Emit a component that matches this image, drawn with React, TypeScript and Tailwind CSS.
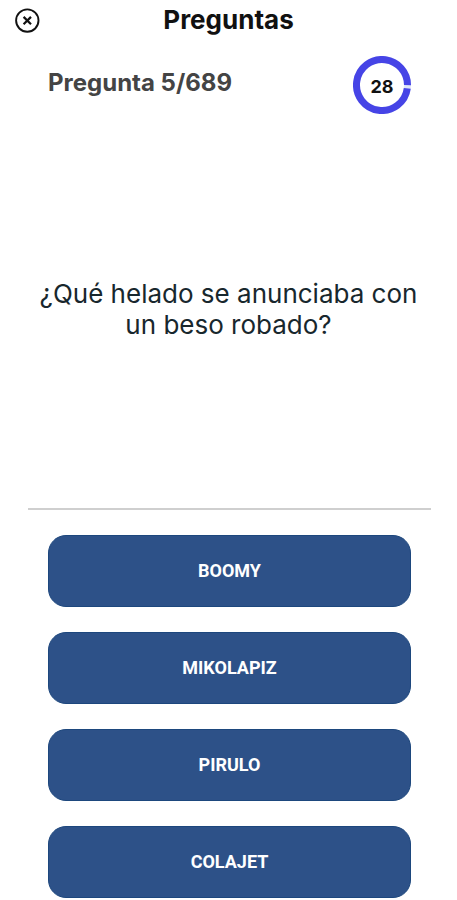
import { useState } from "react";

const question = {
  number: 5,
  total: 689,
  text: "¿Qué helado se anunciaba con un beso robado?",
  answers: ["BOOMY", "MIKOLAPIZ", "PIRULO", "COLAJET"],
};

const radius = 25.5;
const circumference = 2 * Math.PI * radius;

function CloseIcon() {
  return (
    <svg width="26" height="26" viewBox="0 0 26 26" fill="none" stroke="#111">
      <circle cx="13.3" cy="13.6" r="11.2" strokeWidth="1.9" />
      <path
        d="M9.6 9.9l7.4 7.4M17 9.9l-7.4 7.4"
        strokeWidth="2.2"
        strokeLinecap="butt"
      />
    </svg>
  );
}

function Timer({ seconds, total }: { seconds: number; total: number }) {
  const elapsed = (total - seconds) / total;

  return (
    <div className="grid place-items-center" role="timer">
      <svg
        className="col-start-1 row-start-1"
        width="58"
        height="58"
        viewBox="0 0 58 58"
        fill="none"
        strokeWidth="7"
      >
        <circle cx="29" cy="29" r={radius} stroke="#dfe5f8" />
        <circle
          cx="29"
          cy="29"
          r={radius}
          stroke="#4644e6"
          pathLength={circumference}
          strokeDasharray={`${circumference * (1 - elapsed)} ${circumference}`}
          transform={`rotate(${elapsed * 360} 29 29)`}
        />
      </svg>
      <span className="col-start-1 row-start-1 pt-1 text-lg font-bold text-[#111]">
        {seconds}
      </span>
    </div>
  );
}

export default function App() {
  const [selected, setSelected] = useState<string>();

  return (
    <main className="flex min-h-screen flex-col bg-white pb-[2px] font-['Inter',sans-serif]">
      <header className="grid h-10 grid-cols-[1fr_auto_1fr] items-center px-[14px]">
        <button type="button" aria-label="Cerrar" className="justify-self-start">
          <CloseIcon />
        </button>
        <h1 className="text-[26px] leading-8 font-bold text-[#111]">
          Preguntas
        </h1>
      </header>

      <div className="mt-4 flex items-center justify-between pr-[46px] pl-12">
        <p className="pb-1 text-2xl font-bold text-[#444]">
          Pregunta {question.number}/{question.total}
        </p>
        <Timer seconds={28} total={28.6} />
      </div>

      <div className="flex flex-1 items-center justify-center px-8 pb-1">
        <h2 className="text-center text-[26px] leading-[31px] font-normal text-[#18272d]">
          {question.text}
        </h2>
      </div>

      <hr className="mr-[26px] ml-7 border-t-2 border-[#cfcfcf]" />

      <div className="mt-[25px] flex flex-col gap-[25px] pr-[46px] pl-12">
        {question.answers.map((answer) => (
          <button
            key={answer}
            type="button"
            aria-pressed={selected === answer}
            onClick={() => setSelected(answer)}
            className="h-[72px] rounded-[18px] border border-[#1d477d] bg-[#2d5188] font-['Roboto',sans-serif] text-lg font-bold text-white"
          >
            {answer}
          </button>
        ))}
      </div>
    </main>
  );
}
